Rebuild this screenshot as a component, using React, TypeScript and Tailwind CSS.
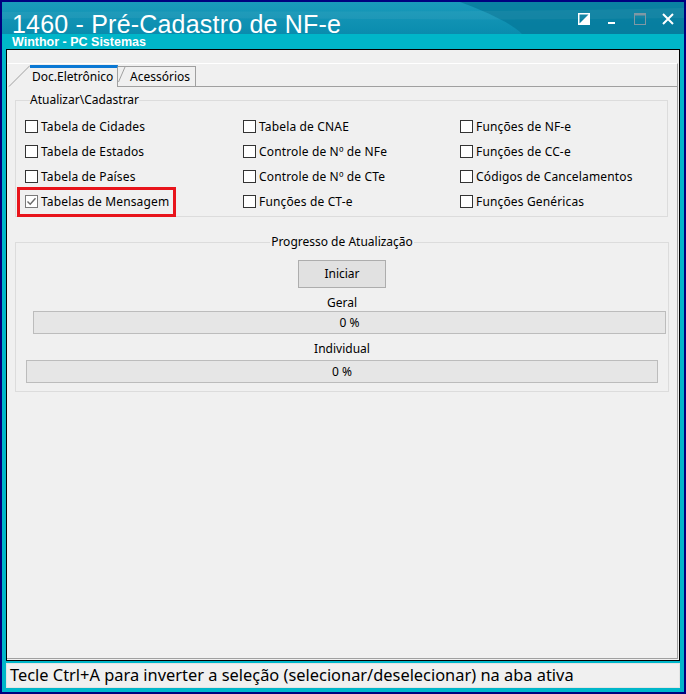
import React from 'react';

const rows: [string, string, string][] = [
  ['Tabela de Cidades', 'Tabela de CNAE', 'Funções de NF-e'],
  ['Tabela de Estados', 'Controle de Nº de NFe', 'Funções de CC-e'],
  ['Tabela de Países', 'Controle de Nº de CTe', 'Códigos de Cancelamentos'],
  ['Tabelas de Mensagem', 'Funções de CT-e', 'Funções Genéricas'],
];

function CheckBox({ checked }: { checked?: boolean }) {
  return (
    <span
      className={
        'w-[13px] h-[13px] shrink-0 bg-white border flex items-center justify-center ' +
        (checked ? 'border-[#7a7a7a]' : 'border-[#333333]')
      }
    >
      {checked && (
        <svg width="11" height="11" viewBox="0 0 11 11" aria-hidden="true">
          <path d="M1.5 5.5 L4.2 8.2 L9.5 2.2" fill="none" stroke="#6b6b6b" strokeWidth="1.4" />
        </svg>
      )}
    </span>
  );
}

function CheckItem({ label, checked, marked }: { label: string; checked?: boolean; marked?: boolean }) {
  return (
    <div className="relative h-[25px] flex items-center gap-[3px]">
      <CheckBox checked={checked} />
      <span className="whitespace-nowrap tracking-[0.15px]">{label}</span>
      {marked && (
        <span className="absolute left-[-8px] top-[-2px] w-[159px] h-[30px] border-[3px] border-[#e8141b]" />
      )}
    </div>
  );
}

function TitleButtons() {
  return (
    <div className="flex items-start gap-[16px] pt-[11px] pr-[10px]">
      <svg width="12" height="12" viewBox="0 0 12 12" aria-hidden="true">
        <rect x="0.75" y="0.75" width="10.5" height="10.5" fill="none" stroke="#fff" strokeWidth="1.5" />
        <path d="M11 1 L11 11 L1 11 Z" fill="#fff" />
      </svg>
      <svg width="12" height="12" viewBox="0 0 12 12" aria-hidden="true">
        <rect x="2" y="9" width="7" height="2" fill="#fff" />
      </svg>
      <svg width="12" height="12" viewBox="0 0 12 12" aria-hidden="true">
        <rect x="0.5" y="0.5" width="11" height="11" fill="none" stroke="#7f98a4" strokeWidth="1" />
        <rect x="0" y="0" width="12" height="2.5" fill="#7f98a4" />
      </svg>
      <svg width="12" height="12" viewBox="0 0 12 12" aria-hidden="true">
        <path d="M1 1 L11 11 M11 1 L1 11" stroke="#fff" strokeWidth="2" />
      </svg>
    </div>
  );
}

function ProgressBar({ className }: { className: string }) {
  return (
    <div
      className={
        'h-[23px] bg-[#e6e6e6] border border-[#bcbcbc] flex items-center justify-center ' + className
      }
    >
      0 %
    </div>
  );
}

export default function App() {
  return (
    <div className="w-[686px] h-[694px] bg-[#00007f] p-[2px] font-['Noto_Sans',sans-serif] text-[12px] text-black">
      <div className="h-full flex flex-col bg-[#00b6c9] pb-[4px]">
        {/* title bar */}
        <div className="relative h-[47px] shrink-0 bg-[linear-gradient(to_bottom,#1a9abb_0px,#0a8cae_32px,#00b6c9_32px)] flex justify-between">
          <svg
            className="absolute left-0 top-0"
            width="682"
            height="32"
            viewBox="0 0 682 32"
            aria-hidden="true"
          >
            <path d="M458 0 C490 12 510 22 520 32 L682 32 L682 0 Z" fill="#05789a" opacity="0.75" />
            <path d="M0 10 C200 8 420 12 682 6 L682 16 C420 20 200 14 0 17 Z" fill="#ffffff" opacity="0.05" />
          </svg>
          <div className="relative flex flex-col pl-[10px] pt-[11px] text-white font-['Liberation_Sans',Arial,sans-serif]">
            <span className="text-[25px] leading-[23px] tracking-[0.2px] whitespace-nowrap">1460 - Pré-Cadastro de NF-e</span>
            <span className="text-[12.5px] leading-[13px] font-bold whitespace-nowrap">Winthor - PC Sistemas</span>
          </div>
          <div className="relative">
            <TitleButtons />
          </div>
        </div>

        {/* main panel */}
        <div className="mx-[4px] h-[612px] shrink-0 border border-black bg-[#f0f0f0] flex flex-col pt-[13px]">
          <div className="flex-1 flex flex-col border-t border-white border-r border-r-[#a0a0a0] border-b border-b-[#a0a0a0] mr-[1px] mb-[1px]">
            {/* tabs */}
            <div className="h-[23px] flex items-end shrink-0">
              <div className="w-[23px] h-[22px] shrink-0">
                <svg width="23" height="22" viewBox="0 0 23 22" aria-hidden="true">
                  <path d="M2 21.5 L23 0.5" stroke="#a0a0a0" strokeWidth="1" />
                </svg>
              </div>
              <div className="w-[88px] h-[22px] border-t-[3px] border-[#0a78d4] border-r border-r-[#a0a0a0] flex items-center pl-[2px] pb-[1px]">
                Doc.Eletrônico
              </div>
              <div className="relative w-[78px] h-[21px] border-t border-t-[#a0a0a0] border-r border-r-[#a0a0a0] border-b border-b-[#a0a0a0] flex items-center pl-[12px]">
                <svg className="absolute left-0 top-0" width="8" height="16" viewBox="0 0 8 16" aria-hidden="true">
                  <path d="M0.5 15 L7 0" stroke="#a0a0a0" strokeWidth="1" fill="none" />
                </svg>
                Acessórios
              </div>
              <div className="flex-1 border-b border-b-[#a0a0a0]" />
            </div>

            {/* sheet */}
            <div className="flex-1 pl-[8px] pr-[9px]">
              <fieldset className="mt-[5px] border border-[#dcdcdc] pl-[9px] pt-[6px] pb-[2px]">
                <legend className="ml-[5px] leading-[16px]">Atualizar\Cadastrar</legend>
                <div className="grid grid-cols-[218px_217px_1fr]">
                  {rows.map((r, i) => (
                    <React.Fragment key={i}>
                      <CheckItem label={r[0]} checked={i === 3} marked={i === 3} />
                      <CheckItem label={r[1]} />
                      <CheckItem label={r[2]} />
                    </React.Fragment>
                  ))}
                </div>
              </fieldset>

              <fieldset className="mt-[17px] mr-[-1px] border border-[#dcdcdc] pb-[8px] flex flex-col">
                <legend className="mx-auto leading-[16px] px-[1px]">Progresso de Atualização</legend>
                <button className="mt-[10px] self-center w-[88px] h-[28px] bg-[#e1e1e1] border border-[#adadad]">
                  Iniciar
                </button>
                <div className="mt-[7px] leading-[16px] text-center">Geral</div>
                <ProgressBar className="mt-[0px] ml-[17px] mr-[2px]" />
                <div className="mt-[7px] leading-[16px] text-center">Individual</div>
                <ProgressBar className="mt-[3px] mx-[10px]" />
              </fieldset>
            </div>
          </div>
        </div>

        {/* status bar */}
        <div className="mx-[4px] mt-[2px] h-[25px] shrink-0 bg-[#f0f0f0] border border-[#e4e4e4] flex items-center pl-[3px] text-[16.4px] whitespace-nowrap">
          Tecle Ctrl+A para inverter a seleção (selecionar/deselecionar) na aba ativa
        </div>
      </div>
    </div>
  );
}
